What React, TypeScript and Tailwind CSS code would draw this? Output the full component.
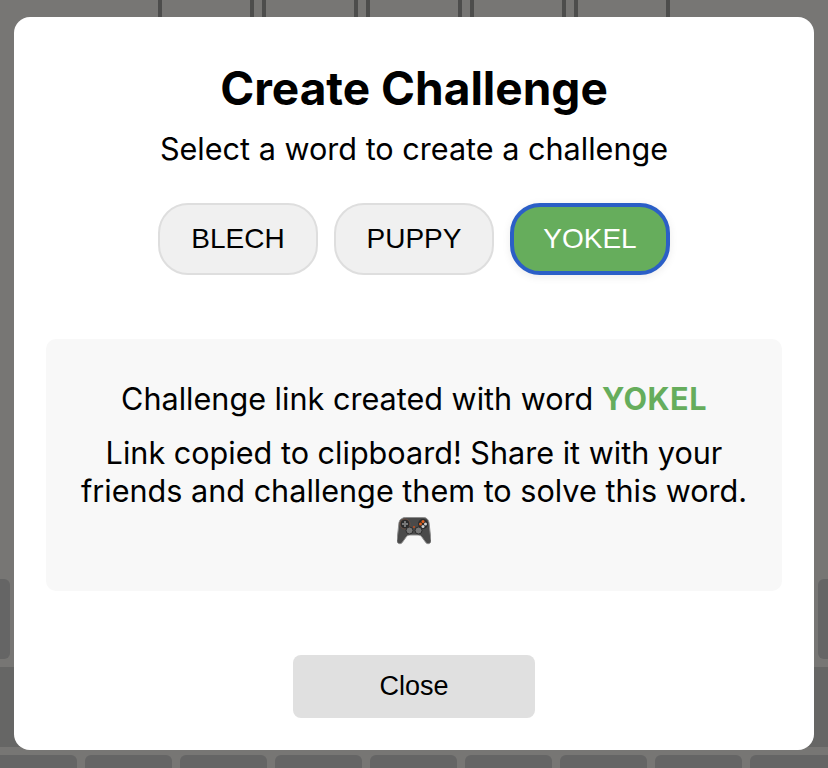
import React from 'react';
import { useState } from 'react';

const WORDS = ['BLECH', 'PUPPY', 'YOKEL'];
const BOARD_CELLS = [0, 1, 2, 3, 4];
const KEY_ROW = [0, 1, 2, 3, 4, 5, 6, 7, 8];

// Gamepad emoji has no colour font here, so it is drawn
const GamepadIcon = () => (
  <svg viewBox="0 0 34 30" className="w-[34px] h-[30px]">
    <path
      d="M8 1.500h18c3 0 5 2 5.500 5l2 18c.3 2.800-3 4.200-5 2.300l-4.500-6.300c-1-1-2-1.500-3.500-1.500h-8c-1.500 0-2.500.5-3.500 1.500L4.500 26.800c-2 1.900-5.300.5-5-2.300l2-18C2 3.500 5 1.500 8 1.500z"
      fill="#4a4a4a"
      stroke="#8d8d8d"
      strokeWidth="1"
      transform="translate(.5 0)"
    />
    <circle cx="8" cy="8" r="5" fill="#2c2c2c" stroke="#6b5145" strokeWidth="1" />
    <path d="M7 5h2v2h2v2h-2v2h-2v-2h-2v-2h2z" fill="#777" />
    <circle cx="26" cy="8" r="5" fill="#2c2c2c" />
    <circle cx="26" cy="5.500" r="1.500" fill="#e0601f" />
    <circle cx="23.500" cy="8" r="1.500" fill="#e0601f" />
    <circle cx="28.500" cy="8" r="1.500" fill="#cfcfcf" />
    <circle cx="26" cy="10.500" r="1.500" fill="#cfcfcf" />
    <circle cx="12.500" cy="14.500" r="3.500" fill="#777" stroke="#2c2c2c" />
    <circle cx="21.500" cy="14.500" r="3.500" fill="#777" stroke="#2c2c2c" />
    <circle cx="17" cy="11" r="1" fill="#c8501c" />
  </svg>
);

const App: React.FC = () => {
  const [selected, setSelected] = useState('YOKEL');

  return (
    <div className="relative w-[828px] h-[768px] overflow-hidden bg-[#777674] font-['Liberation_Sans',sans-serif]">
      {/* 弹窗后面的游戏页面 */}
      <div className="flex justify-center gap-[8px] h-[17px]">
        {BOARD_CELLS.map((cell) => (
          <div key={cell} className="w-[96px] border-x-[4px] border-[#4d4d4c]" />
        ))}
      </div>

      <div className="mt-[562px] flex justify-between h-[80px]">
        <div className="w-[10px] rounded-r-[6px] bg-[#656565]" />
        <div className="w-[10px] rounded-l-[6px] bg-[#656565]" />
      </div>

      <div className="mt-[8px] h-[80px] bg-[#666665]" />

      <div className="mt-[8px] -ml-[10px] flex gap-[8px]">
        {KEY_ROW.map((key) => (
          <div key={key} className="w-[87px] h-[20px] shrink-0 rounded-t-[6px] bg-[#656565]" />
        ))}
      </div>

      {/* 弹窗 */}
      <div className="absolute left-[14px] top-[17px] w-[800px] h-[733px] rounded-[16px] bg-white flex flex-col items-center px-[32px] pt-[43px]">
        <h1 className="text-[46px] leading-[56px] font-bold text-black font-['Inter',sans-serif]">
          Create Challenge
        </h1>
        <p className="mt-[15px] text-[30.6px] leading-[36px] text-black font-['Inter',sans-serif]">
          Select a word to create a challenge
        </p>

        <div className="mt-[36px] flex gap-[16px]">
          {WORDS.map((word) => (
            <button
              key={word}
              onClick={() => setSelected(word)}
              className={
                word === selected
                  ? 'w-[160px] h-[72px] rounded-[30px] border-[4px] border-[#2b5fc7] bg-[#66ad5c] text-white text-[28px] shadow-[0_2px_8px_rgba(0,0,0,0.08)]'
                  : 'w-[160px] h-[72px] rounded-[30px] border-2 border-[#dedede] bg-[#f0f0f0] text-black text-[28px]'
              }
            >
              {word}
            </button>
          ))}
        </div>

        <div className="mt-[64px] w-[736px] h-[252px] rounded-[10px] bg-[#f8f8f8] flex flex-col items-center pt-[41px] px-[32px] text-center font-['Inter',sans-serif] text-black">
          <p className="text-[30.6px] leading-[38px]">
            Challenge link created with word <span className="font-bold tracking-[0.5px] text-[#66ad5c]">YOKEL</span>
          </p>
          <p className="mt-[16px] text-[30.6px] leading-[38px]">
            Link copied to clipboard! Share it with your friends and challenge them to solve this word.
          </p>
          <div className="mt-[6px]">
            <GamepadIcon />
          </div>
        </div>

        <button className="mt-[64px] w-[242px] h-[63px] rounded-[8px] bg-[#e0e0e0] text-black text-[27px]">
          Close
        </button>
      </div>
    </div>
  );
};

export default App;
